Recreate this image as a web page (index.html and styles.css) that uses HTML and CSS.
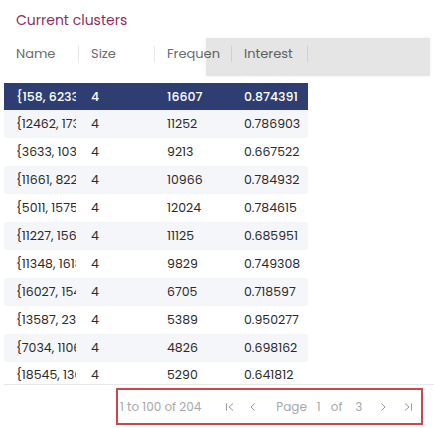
FILE: index.html
```html
<!DOCTYPE html>
<html>
<head>
<meta charset="utf-8">
<link rel="stylesheet" href="styles.css">
</head>
<body>
<div class="panel">
  <div class="title">Current clusters</div>
  <div class="grid">
    <div class="head">
      <div class="hcell"><span class="clip">Name</span></div>
      <div class="hcell"><span class="clip">Size</span></div>
      <div class="hcell"><span class="clip">Frequency</span></div>
      <div class="hcell"><span class="clip">Interest</span></div>
    </div>
    <div class="row selected"><div class="cell name"><span class="clip">{158, 6233, 9120, 14452}</span></div><div class="cell">4</div><div class="cell">16607</div><div class="cell">0.874391</div></div>
    <div class="row alt"><div class="cell name"><span class="clip">{12462, 17388, 2011, 540}</span></div><div class="cell">4</div><div class="cell">11252</div><div class="cell">0.786903</div></div>
    <div class="row"><div class="cell name"><span class="clip">{3633, 10321, 4478, 912}</span></div><div class="cell">4</div><div class="cell">9213</div><div class="cell">0.667522</div></div>
    <div class="row alt"><div class="cell name"><span class="clip">{11661, 8224, 301, 7719}</span></div><div class="cell">4</div><div class="cell">10966</div><div class="cell">0.784932</div></div>
    <div class="row"><div class="cell name"><span class="clip">{5011, 15750, 822, 1044}</span></div><div class="cell">4</div><div class="cell">12024</div><div class="cell">0.784615</div></div>
    <div class="row alt"><div class="cell name"><span class="clip">{11227, 15633, 4102, 77}</span></div><div class="cell">4</div><div class="cell">11125</div><div class="cell">0.685951</div></div>
    <div class="row"><div class="cell name"><span class="clip">{11348, 16185, 2290, 61}</span></div><div class="cell">4</div><div class="cell">9829</div><div class="cell">0.749308</div></div>
    <div class="row alt"><div class="cell name"><span class="clip">{16027, 15442, 901, 338}</span></div><div class="cell">4</div><div class="cell">6705</div><div class="cell">0.718597</div></div>
    <div class="row"><div class="cell name"><span class="clip">{13587, 23, 11540, 6012}</span></div><div class="cell">4</div><div class="cell">5389</div><div class="cell">0.950277</div></div>
    <div class="row alt"><div class="cell name"><span class="clip">{7034, 11065, 3321, 982}</span></div><div class="cell">4</div><div class="cell">4826</div><div class="cell">0.698162</div></div>
    <div class="row final"><div class="cell name"><span class="clip">{18545, 13009, 471, 2203}</span></div><div class="cell">4</div><div class="cell">5290</div><div class="cell">0.641812</div></div>
    <div class="drag-ghost"></div>
  </div>
  <div class="pager-wrap">
    <div class="pager">
      <span class="summary">1 to 100 of 204</span>
      <svg class="ico ico-first" viewBox="0 0 10 10" width="10" height="10"><path d="M1.5 1.5v7M8 1.5L4 5l4 3.5" fill="none" stroke="currentColor" stroke-width="1"/></svg>
      <svg class="ico ico-prev" viewBox="0 0 10 10" width="10" height="10"><path d="M6.5 1.5L3 5l3.5 3.5" fill="none" stroke="currentColor" stroke-width="1"/></svg>
      <span class="pg-page">Page</span><span class="pg-cur">1</span><span class="pg-of">of</span><span class="pg-total">3</span>
      <svg class="ico ico-next" viewBox="0 0 10 10" width="10" height="10"><path d="M3.5 1.5L7 5l-3.5 3.5" fill="none" stroke="currentColor" stroke-width="1"/></svg>
      <svg class="ico ico-last" viewBox="0 0 10 10" width="10" height="10"><path d="M2 1.5L6 5l-4 3.5M8.5 1.5v7" fill="none" stroke="currentColor" stroke-width="1"/></svg>
    </div>
  </div>
</div>
</body>
</html>
```

FILE: styles.css
```css
html, body {
  margin: 0;
  padding: 0;
  background: #ffffff;
}
body {
  font-family: "Poppins", Inter, "Noto Sans", sans-serif;
  color: #2a2a2a;
}
.panel {
  width: 434px;
  height: 428px;
  overflow: hidden;
  padding: 0 4px;
  box-sizing: border-box;
}
.title {
  padding: 11px 0 0 12px;
  height: 18px;
  font-size: 14px;
  line-height: 18px;
  color: #8c2d5e;
}
.grid {
  position: relative;
  width: 304px;
}
.head {
  display: grid;
  grid-template-columns: 75px 76px 77px 76px;
  height: 50px;
  margin-top: 3px;
  align-items: start;
}
.hcell {
  font-size: 13px;
  color: #6b6b6b;
  padding: 0 12px;
  margin-top: 14px;
  border-right: 1px solid #e8e8e8;
  line-height: 16px;
  min-width: 0;
}
.hcell:nth-child(3) { padding-right: 11px; }
.hcell:last-child { padding-right: 0; }
.clip {
  display: block;
  white-space: nowrap;
  overflow: hidden;
}
.row {
  display: grid;
  grid-template-columns: 75px 76px 77px 76px;
  height: 28px;
  align-items: center;
  font-size: 12.5px;
  color: #2b2b2b;
}
.row.alt { background: #f5f6f9; }
.row.selected {
  background: #2e3d72;
  color: #ffffff;
  font-weight: 500;
  height: 27px;
  margin-top: 1px;
}
.row.final {
  border-bottom: 1px solid #e8e8e8;
  align-items: start;
  line-height: 16px;
  padding-top: 5px;
  box-sizing: border-box;
  height: 23px;
  width: 430px;
}
.cell {
  padding-left: 12px;
  white-space: nowrap;
  overflow: hidden;
  min-width: 0;
}
.cell.name { padding-right: 3px; }
.drag-ghost {
  position: absolute;
  left: 202px;
  top: 6px;
  width: 224px;
  height: 38px;
  background: rgba(0, 0, 0, 0.1);
  box-shadow: 0 0 3px rgba(0, 0, 0, 0.08);
}
.pager-wrap {
  display: flex;
  justify-content: flex-end;
  padding-right: 7px;
  margin-top: 3px;
}
.pager {
  width: 307px;
  height: 37px;
  box-sizing: border-box;
  border: 2px solid #c9484b;
  display: flex;
  align-items: center;
  font-size: 12px;
  color: #a8a8a8;
  padding-left: 2px;
}
.ico { color: #9a9a9a; flex: none; }
.ico-first { margin-left: 24px; }
.ico-prev { margin-left: 13px; }
.pg-page { margin-left: 18px; }
.pg-cur { margin-left: 10px; }
.pg-of { margin-left: 10px; }
.pg-total { margin-left: 13px; }
.ico-next { margin-left: 16px; }
.ico-last { margin-left: 15px; }
```
